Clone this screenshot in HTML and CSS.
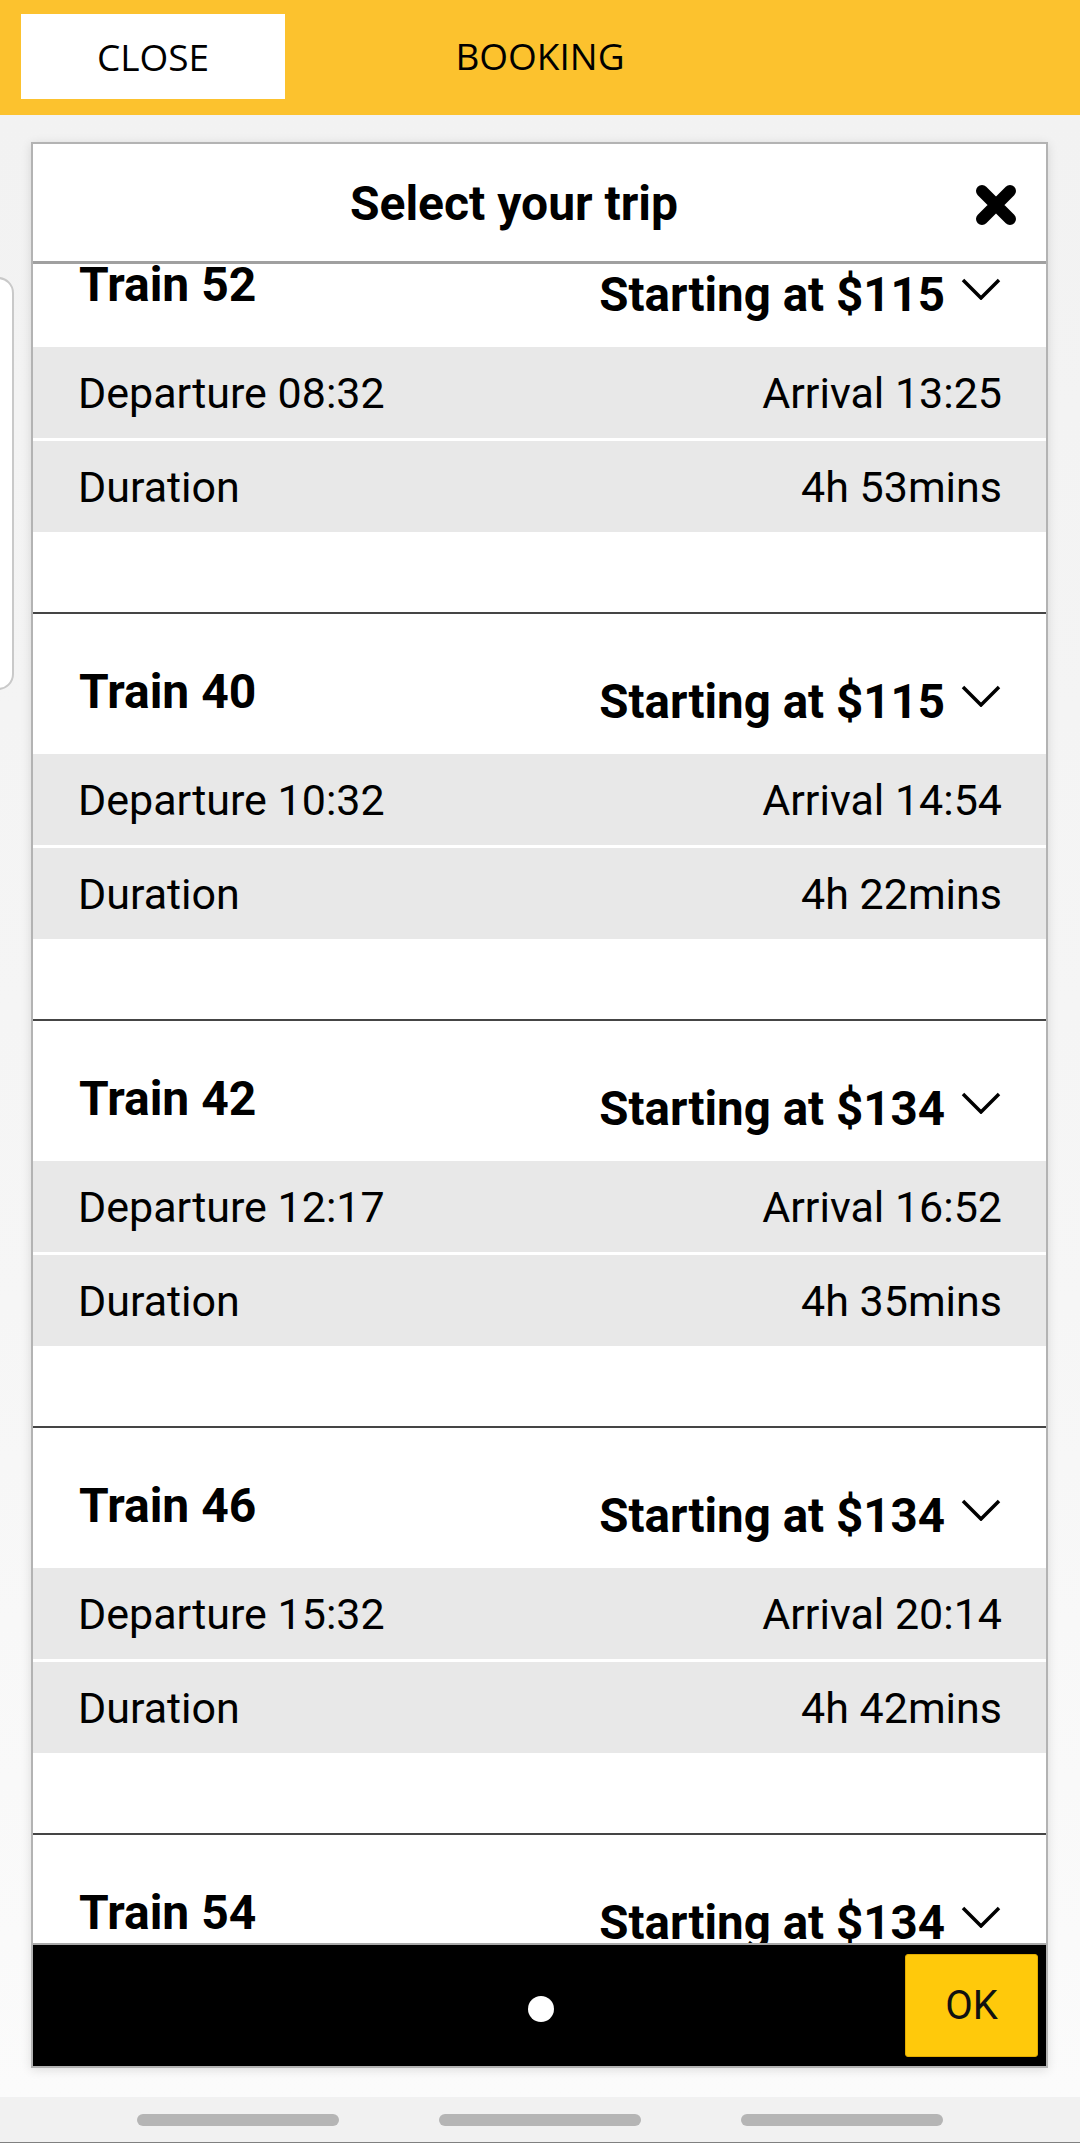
FILE: index.html
```html
<!DOCTYPE html>
<html>
<head>
<meta charset="utf-8">
<link rel="stylesheet" href="styles.css">
</head>
<body>
<header class="topbar">
  <div class="close-btn">CLOSE</div>
  <div class="topbar-title">BOOKING</div>
  <div></div>
</header>
<main class="page">
  <div class="peek-card"></div>
  <section class="modal">
    <div class="modal-head">
      <div class="modal-title">Select your trip</div>
      <svg class="modal-x" width="46" height="44" viewBox="0 0 46 44">
        <path d="M9 8 L37 36 M37 8 L9 36" stroke="#000" stroke-width="12" stroke-linecap="round" fill="none"/>
      </svg>
    </div>
    <div class="list-viewport">
      <div class="list">
        <div class="card">
          <div class="card-head">
            <div class="train">Train 52</div>
            <div class="price">Starting at $115<svg class="chev" width="40" height="22" viewBox="0 0 40 22"><polyline points="2,2 20,20 38,2" fill="none" stroke="#000" stroke-width="3.5"/></svg></div>
          </div>
          <div class="row"><span>Departure 08:32</span><span>Arrival 13:25</span></div>
          <div class="row row2"><span>Duration</span><span>4h 53mins</span></div>
        </div>
        <div class="card">
          <div class="card-head">
            <div class="train">Train 40</div>
            <div class="price">Starting at $115<svg class="chev" width="40" height="22" viewBox="0 0 40 22"><polyline points="2,2 20,20 38,2" fill="none" stroke="#000" stroke-width="3.5"/></svg></div>
          </div>
          <div class="row"><span>Departure 10:32</span><span>Arrival 14:54</span></div>
          <div class="row row2"><span>Duration</span><span>4h 22mins</span></div>
        </div>
        <div class="card">
          <div class="card-head">
            <div class="train">Train 42</div>
            <div class="price">Starting at $134<svg class="chev" width="40" height="22" viewBox="0 0 40 22"><polyline points="2,2 20,20 38,2" fill="none" stroke="#000" stroke-width="3.5"/></svg></div>
          </div>
          <div class="row"><span>Departure 12:17</span><span>Arrival 16:52</span></div>
          <div class="row row2"><span>Duration</span><span>4h 35mins</span></div>
        </div>
        <div class="card">
          <div class="card-head">
            <div class="train">Train 46</div>
            <div class="price">Starting at $134<svg class="chev" width="40" height="22" viewBox="0 0 40 22"><polyline points="2,2 20,20 38,2" fill="none" stroke="#000" stroke-width="3.5"/></svg></div>
          </div>
          <div class="row"><span>Departure 15:32</span><span>Arrival 20:14</span></div>
          <div class="row row2"><span>Duration</span><span>4h 42mins</span></div>
        </div>
        <div class="card">
          <div class="card-head">
            <div class="train">Train 54</div>
            <div class="price">Starting at $134<svg class="chev" width="40" height="22" viewBox="0 0 40 22"><polyline points="2,2 20,20 38,2" fill="none" stroke="#000" stroke-width="3.5"/></svg></div>
          </div>
        </div>
      </div>
    </div>
    <div class="modal-foot">
      <div class="dot"></div>
      <div class="ok-btn">OK</div>
    </div>
  </section>
</main>
<footer class="navbar">
  <div class="pill"></div>
  <div class="pill"></div>
  <div class="pill"></div>
</footer>
</body>
</html>
```
FILE: styles.css
```css
* { box-sizing: border-box; }
html, body { margin: 0; padding: 0; }
body {
  width: 1080px;
  height: 2143px;
  overflow: hidden;
  font-family: Roboto, "Liberation Sans", sans-serif;
  color: #000;
  background: #fcfcfc;
}

.topbar {
  height: 115px;
  background: #fcc22e;
  display: grid;
  grid-template-columns: 1fr auto 1fr;
  align-items: center;
  font-family: "Open Sans", "Liberation Sans", sans-serif;
  font-size: 37px;
  color: #000;
}
.close-btn {
  justify-self: start;
  margin-left: 21px;
  width: 264px;
  height: 85px;
  background: #fff;
  display: flex;
  align-items: center;
  justify-content: center;
  margin-top: -2px;
}
.topbar-title {
  margin-top: -4px;
}

.page {
  position: relative;
  height: 1982px;
  background: linear-gradient(#f2f2f2, #f6f6f6 60%, #fbfbfb);
  overflow: hidden;
}
.peek-card {
  margin-top: 162px;
  margin-left: -20px;
  width: 34px;
  height: 413px;
  background: #fff;
  border: 2px solid #c9c9c9;
  border-radius: 16px;
}

.modal {
  position: absolute;
  top: 27px;
  left: 31px;
  width: 1017px;
  height: 1926px;
  border: 2px solid #b3b3b3;
  background: #fff;
  box-shadow: 0 2px 10px rgba(0,0,0,0.12);
  display: flex;
  flex-direction: column;
}
.modal-head {
  height: 120px;
  flex: none;
  border-bottom: 3px solid #a0a0a0;
  display: flex;
  align-items: center;
  padding-right: 27px;
}
.modal-title {
  flex: 1;
  text-align: center;
  padding-left: 22px;
  font-weight: 700;
  font-size: 48px;
  margin-top: 2px;
}
.modal-x {
  flex: none;
  margin-top: 4px;
}

.list-viewport {
  flex: 1;
  overflow: hidden;
}
.list {
  margin-top: -59px;
}
.card {
  height: 407px;
  border-top: 2px solid #454545;
}
.card-head {
  height: 140px;
  display: flex;
  justify-content: space-between;
  align-items: flex-start;
  padding: 50px 45px 0 46px;
  font-weight: 700;
  font-size: 48px;
  line-height: 56px;
}
.price {
  display: flex;
  align-items: flex-start;
  margin-top: 10px;
  font-size: 47.5px;
}
.chev {
  margin-left: 16px;
  margin-top: 11px;
}
.row {
  height: 91px;
  background: #e8e8e8;
  display: flex;
  justify-content: space-between;
  align-items: center;
  padding: 0 44px 0 45px;
  font-size: 43px;
}
.row2 {
  margin-top: 3px;
}

.modal-foot {
  height: 123px;
  flex: none;
  border-top: 2px solid #a9a9a9;
  background: #000;
  position: relative;
  display: flex;
  align-items: center;
  justify-content: flex-end;
  padding-right: 8px;
}
.dot {
  position: absolute;
  left: 495px;
  top: 51px;
  width: 26px;
  height: 26px;
  border-radius: 50%;
  background: #fff;
}
.ok-btn {
  width: 133px;
  height: 103px;
  background: #ffc90b;
  border: 1px solid #e3ac00;
  border-radius: 3px;
  display: flex;
  align-items: center;
  justify-content: center;
  font-size: 40px;
  color: #111;
}

.navbar {
  height: 46px;
  background: #f1f1f1;
  border-bottom: 1px solid #808080;
  display: flex;
  justify-content: center;
  align-items: flex-start;
  gap: 100px;
  padding-top: 17px;
}
.pill {
  width: 202px;
  height: 12px;
  border-radius: 6px;
  background: #b5b5b5;
}
```
